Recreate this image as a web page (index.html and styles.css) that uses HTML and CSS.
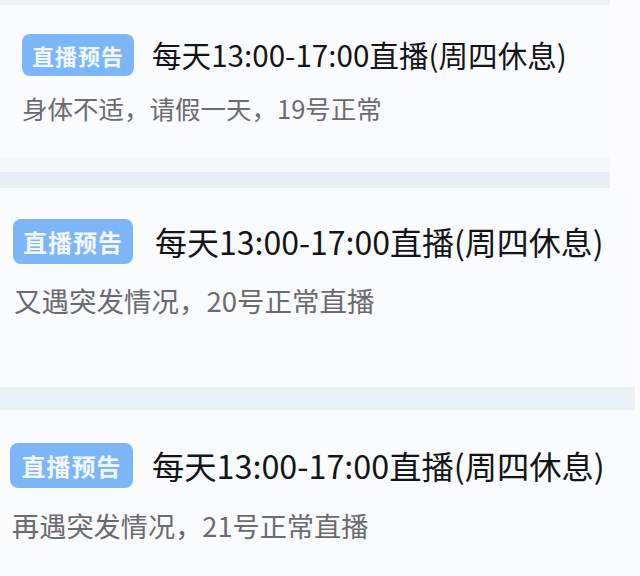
FILE: index.html
```html
<!DOCTYPE html>
<html lang="zh-CN">
<head>
    <meta charset="UTF-8">
    <meta name="viewport" content="width=device-width, initial-scale=1.0">
    <title>直播预告</title>
    <link rel="stylesheet" href="styles.css">
</head>
<body>
    <div class="page">
        <div class="strip strip-top"></div>
        <div class="card card-one">
            <div class="head">
                <span class="badge">直播预告</span>
                <span class="title">每天13:00-17:00直播(周四休息)</span>
            </div>
            <p class="note">身体不适，请假一天，19号正常</p>
        </div>
        <div class="fade"></div>
        <div class="strip strip-mid"></div>

        <div class="card card-two">
            <div class="head">
                <span class="badge">直播预告</span>
                <span class="title">每天13:00-17:00直播(周四休息)</span>
            </div>
            <p class="note">又遇突发情况，20号正常直播</p>
        </div>
        <div class="strip strip-low"></div>

        <div class="card card-three">
            <div class="head">
                <span class="badge">直播预告</span>
                <span class="title">每天13:00-17:00直播(周四休息)</span>
            </div>
            <p class="note">再遇突发情况，21号正常直播</p>
        </div>
    </div>
</body>
</html>
```

FILE: styles.css
```css
body {
    margin: 0;
    background-color: #fcfcfe;
    font-family: 'Noto Sans CJK SC', 'Noto Sans', sans-serif;
}

.page {
    width: 640px;
    height: 576px;
    overflow: hidden;
    display: flex;
    flex-direction: column;
}

.strip {
    background-color: #e9eef6;
    flex-shrink: 0;
}

.strip-top {
    height: 5px;
    width: 610px;
    background-color: #eef1f6;
}

.strip-mid {
    height: 16px;
    width: 610px;
}

.strip-low {
    height: 23px;
    width: 635px;
    background-color: #ebeff7;
}

.fade {
    height: 15px;
    width: 610px;
    background-color: #f5f7fb;
    flex-shrink: 0;
}

.card {
    background-color: #fafbfd;
    flex-shrink: 0;
    box-sizing: border-box;
}

.head {
    display: flex;
    align-items: center;
}

.badge {
    display: flex;
    align-items: center;
    justify-content: center;
    background-color: #7db6f6;
    color: #f2f7fe;
    font-weight: bold;
    border-radius: 8px;
    letter-spacing: 1px;
}

.title {
    color: #141418;
    white-space: nowrap;
}

.note {
    margin: 0;
    color: #6a6a70;
    white-space: nowrap;
}

.card-one {
    width: 610px;
    height: 152px;
    padding: 28px 0 0 22px;
}

.card-one .badge {
    width: 112px;
    height: 42px;
    font-size: 22px;
}

.card-one .title {
    margin-left: 18px;
    font-size: 29.6px;
}

.card-one .note {
    margin-top: 15px;
    font-size: 25.5px;
    line-height: 34px;
}

.card-two {
    width: 635px;
    height: 199px;
    padding: 30px 0 0 13px;
}

.card-two .badge {
    width: 120px;
    height: 45px;
    font-size: 24px;
}

.card-two .title {
    margin-left: 22px;
    font-size: 32px;
}

.card-two .note {
    margin-left: 1px;
    margin-top: 18px;
    font-size: 27.5px;
    line-height: 36px;
}

.card-three {
    width: 640px;
    flex-grow: 1;
    padding: 32px 0 0 10px;
}

.card-three .badge {
    width: 123px;
    height: 45px;
    font-size: 24px;
}

.card-three .title {
    margin-left: 19px;
    font-size: 32.3px;
}

.card-three .note {
    margin-left: 2px;
    margin-top: 19px;
    font-size: 27.2px;
    line-height: 36px;
}
```
